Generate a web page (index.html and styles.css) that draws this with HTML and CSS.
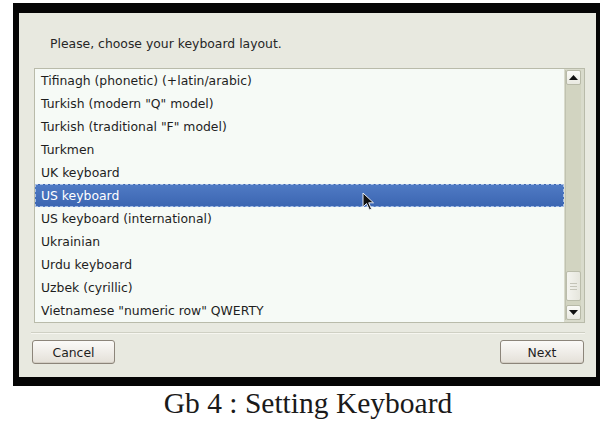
FILE: index.html
```html
<!DOCTYPE html>
<html>
<head>
    <title>Setting Keyboard</title>
    <link rel="stylesheet" href="styles.css">
</head>
<body>
    <div class="frame">
        <div class="dialog">
            <p class="prompt">Please, choose your keyboard layout.</p>

            <div class="listbox">
                <div class="rows">
                    <div class="row">Tifinagh (phonetic) (+latin/arabic)</div>
                    <div class="row">Turkish (modern "Q" model)</div>
                    <div class="row">Turkish (traditional "F" model)</div>
                    <div class="row">Turkmen</div>
                    <div class="row">UK keyboard</div>
                    <div class="row selected">US keyboard</div>
                    <div class="row">US keyboard (international)</div>
                    <div class="row">Ukrainian</div>
                    <div class="row">Urdu keyboard</div>
                    <div class="row">Uzbek (cyrillic)</div>
                    <div class="row">Vietnamese "numeric row" QWERTY</div>
                </div>
                <div class="scrollbar">
                    <div class="step">
                        <svg width="9" height="5" viewBox="0 0 9 5"><path d="M0 5 L4.5 0 L9 5 Z" fill="#111"/></svg>
                    </div>
                    <div class="trough"></div>
                    <div class="thumb">
                        <span></span><span></span><span></span>
                    </div>
                    <div class="trough-end"></div>
                    <div class="step">
                        <svg width="9" height="5" viewBox="0 0 9 5"><path d="M0 0 L4.5 5 L9 0 Z" fill="#111"/></svg>
                    </div>
                </div>
                <!-- mouse pointer sitting on the selected row -->
                <svg class="pointer" width="14" height="20" viewBox="0 0 14 20">
                    <path d="M1 1 L1 15 L4.5 11.5 L7.5 18 L9.5 17 L6.7 10.8 L11.5 10.8 Z" fill="#111" stroke="#e8ecf4" stroke-width="1"/>
                </svg>
            </div>

            <div class="separator"></div>

            <div class="actions">
                <button class="button">Cancel</button>
                <button class="button">Next</button>
            </div>
        </div>
    </div>

    <p class="caption">Gb 4 : Setting Keyboard</p>
</body>
</html>
```

FILE: styles.css
```css
body {
    margin: 0;
    background: #fff;
    font-family: 'DejaVu Sans', 'Noto Sans', sans-serif;
    font-size: 12.4px;
    color: #1e1e1e;
}

.frame {
    margin: 3px 0 0 13px;
    border-style: solid;
    border-color: #050505;
    border-width: 10px 4px 9px 6px;
    background: #060606;
}

.dialog {
    background: #e8e9e0;
    height: 364px;
    padding: 0 11px 0 15px;
    box-sizing: border-box;
    display: flex;
    flex-direction: column;
}

.prompt {
    margin: 24px 0 0 16px;
    line-height: 14px;
    color: #262626;
}

.listbox {
    position: relative;
    margin-top: 17px;
    display: flex;
    border: 1px solid #b9bbaa;
    background: #d9dbcc;
    height: 253px;
}

.rows {
    flex: 1;
    background: #f6faf6;
}

.row {
    height: 23px;
    line-height: 23px;
    padding-left: 6px;
    box-sizing: border-box;
    white-space: nowrap;
}

.row.selected {
    background: linear-gradient(#4f7ac4, #3c66b2);
    color: #fff;
    border: 1px dashed #a9c0e6;
    line-height: 21px;
    padding-left: 5px;
}

.scrollbar {
    width: 15px;
    margin: 1px 3px 2px 1px;
    display: flex;
    flex-direction: column;
    background: #d2d4c1;
    border-left: 1px solid #c0c2b0;
}

.step {
    height: 13px;
    background: linear-gradient(#fbfbf8, #e9e9e1);
    border: 1px solid #b8baa8;
    border-radius: 2px;
    display: flex;
    align-items: center;
    justify-content: center;
}

.trough {
    flex: 1;
}

.thumb {
    height: 28px;
    background: linear-gradient(90deg, #f4f4ef, #e6e6dd);
    border: 1px solid #babcaa;
    border-radius: 2px;
    display: flex;
    flex-direction: column;
    justify-content: center;
    align-items: center;
    gap: 2px;
}

.thumb span {
    width: 7px;
    height: 1px;
    background: #c4c4b8;
}

.trough-end {
    height: 4px;
}

.pointer {
    position: absolute;
    left: 327px;
    top: 123px;
}

.separator {
    margin: 9px 0 0 -3px;
    height: 1px;
    background: #cfd0c4;
    border-bottom: 1px solid #f6f6f0;
}

.actions {
    margin: 6px 1px 0 -2px;
    display: flex;
    justify-content: space-between;
}

.button {
    font-family: 'DejaVu Sans', 'Noto Sans', sans-serif;
    font-size: 12.4px;
    color: #1e1e1e;
    height: 24px;
    padding: 0;
    background: linear-gradient(#fbfaf8, #e4e0d8);
    border: 1px solid #8c857a;
    border-radius: 3px;
    box-shadow: inset 0 -1px 0 #d3cec4;
}

.button:first-child {
    width: 83px;
}

.button:last-child {
    width: 84px;
}

.caption {
    margin: 0;
    padding-left: 16px;
    text-align: center;
    font-family: 'Liberation Serif', 'Times New Roman', serif;
    font-size: 29.5px;
    line-height: 34px;
    color: #1a1a1a;
}
```
